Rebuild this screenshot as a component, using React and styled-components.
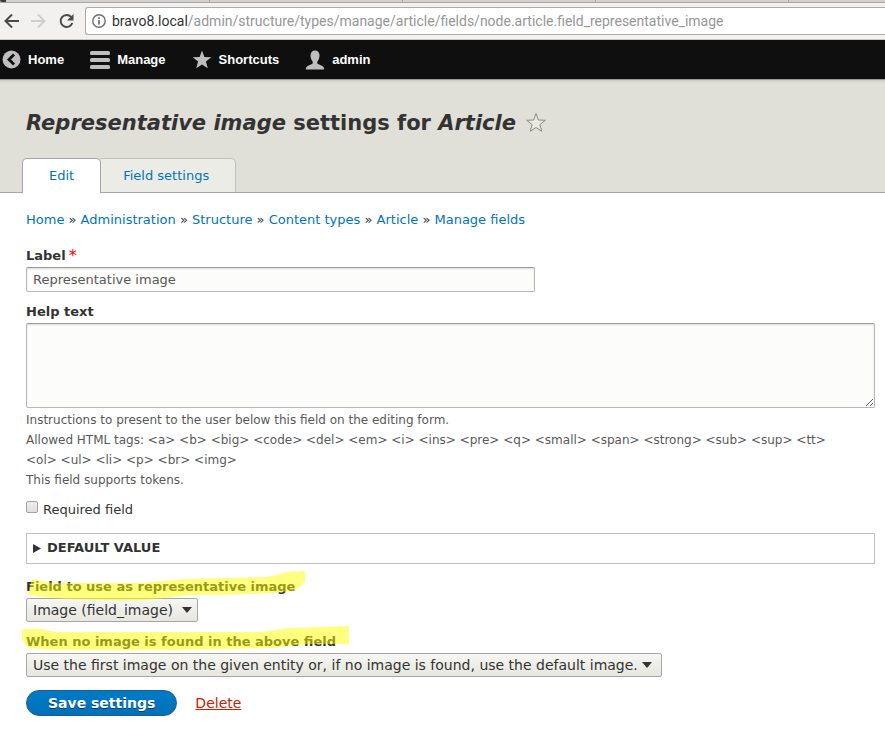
import React from "react";
import styled, { createGlobalStyle, css } from "styled-components";

const GlobalStyle = createGlobalStyle`
  *, *::before, *::after { box-sizing: border-box; }
  body {
    margin: 0;
    background: #fff;
    color: #333;
    font: 13px/20px "DejaVu Sans", Verdana, sans-serif;
    overflow-x: hidden;
  }
  a { color: #0074bd; text-decoration: none; }
  button, input, select, textarea { font-family: inherit; color: inherit; margin: 0; }
`;

const TabStrip = styled.div`
  display: grid;
  grid-template-columns: 210px repeat(3, 193px) 1fr;
  height: 3px;
  background: #d2d1cf;
  border-bottom: 1px solid #a9a8a6;
`;
const BrowserTab = styled.span`
  border-right: 1px solid #aaa9a7;
  &:last-child { border-right: 0; }
  &:first-child { border-left: 6px solid #3c3b37; border-bottom-left-radius: 2px; }
`;
const BrowserBar = styled.div`
  display: flex;
  align-items: center;
  height: 37px;
  background: #f2f1f0;
  border-bottom: 1px solid #c9c8c6;
`;
const NavButton = styled.button`
  display: flex;
  justify-content: center;
  align-items: center;
  flex-shrink: 0;
  width: 28px;
  height: 28px;
  padding: 0;
  border: 0;
  background: none;
  &:first-child { width: 24px; }
`;
const AddressBox = styled.div`
  display: flex;
  align-items: center;
  flex: 1;
  height: 28px;
  margin-left: 5px;
  padding-left: 6px;
  gap: 6px;
  background: #fff;
  border: 1px solid #acaba9;
  border-right: 0;
  border-radius: 3px 0 0 3px;
`;
const Address = styled.span`
  font: 14px/20px Roboto, "Noto Sans", sans-serif;
  color: #969696;
  white-space: nowrap;
  b { font-weight: 400; color: #333; }
`;

const AdminBar = styled.nav`
  display: flex;
  align-items: center;
  height: 39px;
  padding-left: 2px;
  gap: 26px;
  background: #0f0f0f;
`;
const AdminLink = styled.a`
  display: flex;
  align-items: center;
  gap: 7px;
  color: #fff;
  font: bold 13px/20px "Liberation Sans", Arial, sans-serif;
`;

const Header = styled.header`
  padding: 31px 22px 0;
  background: #e0e0d8;
  border-bottom: 1px solid #a6a6a6;
  box-shadow: inset 0 1px 0 #999, inset 0 4px 3px -2px #c4c4bd;
`;
const TitleRow = styled.div`
  display: flex;
  align-items: center;
  gap: 10px;
  padding: 0 4px;
`;
const Title = styled.h1`
  margin: 0;
  font-size: 21px;
  line-height: 26px;
`;
const StarButton = styled.button`
  display: flex;
  padding: 0;
  border: 0;
  background: none;
`;
const Tabs = styled.nav`
  display: flex;
  margin-top: 22px;
`;
const Tab = styled.a`
  height: 34px;
  padding: 6px 26px 0 22px;
  line-height: 22px;
  border: 1px solid #c0c0ba;
  border-width: 1px 1px 0 0;
  border-radius: 0 5px 0 0;
  background: #ecece6;
  ${({ $active }) => $active && css`
    height: 35px;
    margin-bottom: -1px;
    padding: 6px 26px 0;
    border: 1px solid #a6a6a6;
    border-bottom: 0;
    border-radius: 5px 5px 0 0;
    background: #fff;
  `}
`;

const Main = styled.main`
  padding: 17px 10px 16px 26px;
`;
const Breadcrumb = styled.nav`
  line-height: 20px;
  margin-bottom: 16px;
`;
const Form = styled.form`
  display: flex;
  flex-direction: column;
`;
const Field = styled.div`
  display: flex;
  flex-direction: column;
  align-items: flex-start;
  position: relative;
  margin-bottom: ${({ $gap }) => $gap}px;
`;
const Label = styled.label`
  display: flex;
  gap: 3px;
  font-weight: bold;
  line-height: 20px;
  margin-bottom: 1px;
`;
const RequiredMark = styled.span`
  color: #f00;
  font-size: 16px;
  font-weight: 400;
`;
const control = css`
  border: 1px solid #b8b8b8;
  border-top-color: #999;
  border-radius: 2px;
  background: #fcfcfa;
  box-shadow: inset 0 1px 2px rgba(0, 0, 0, 0.125);
  color: #595959;
  font-size: 13px;
`;
const TextInput = styled.input`
  ${control}
  width: 60%;
  height: 25px;
  padding: 0 6px;
`;
const TextArea = styled.textarea`
  ${control}
  display: block;
  width: 100%;
  height: 85px;
  padding: 4px 6px;
`;
const Help = styled.div`
  margin-top: 2px;
  padding-right: 20px;
  color: #595959;
  font-size: 12px;
  line-height: 20px;
`;
const CheckRow = styled.div`
  display: flex;
  gap: 5px;
  margin-bottom: 13px;
`;
const Checkbox = styled.input`
  appearance: none;
  width: 12px;
  height: 12px;
  margin-top: 1px;
  border: 1px solid #a3a3a3;
  border-radius: 2px;
  background: linear-gradient(#ededed, #dedede);
  &:checked { background: #0074bd; }
`;
const Details = styled.details`
  border: 1px solid #bfbfbf;
  margin-bottom: 13px;
`;
const Summary = styled.summary`
  display: flex;
  align-items: center;
  gap: 6px;
  padding: 4px 6px 5px;
  font-weight: bold;
  text-transform: uppercase;
`;
const SelectBox = styled.span`
  display: inline-grid;
  align-items: center;
  justify-items: end;
  > * { grid-area: 1 / 1; }
  svg { margin-right: ${({ $inset }) => $inset}px; pointer-events: none; }
`;
const Select = styled.select`
  appearance: none;
  height: 24px;
  padding: 0 23px 0 6px;
  border: 1px solid #a6a6a6;
  border-radius: 2px;
  background: linear-gradient(#f6f6f3, #e7e7df);
  font-size: 14px;
`;
const Marker = styled.svg`
  position: absolute;
  left: -4px;
  top: -9px;
  pointer-events: none;
`;
const Actions = styled.div`
  display: flex;
  align-items: center;
  gap: 18px;
`;
const SaveButton = styled.button`
  height: 26px;
  padding: 0 21px;
  border: 1px solid #1e5c90;
  border-radius: 13px;
  background: linear-gradient(#007bc6, #0071b8);
  color: #fff;
  font-size: 14px;
  font-weight: 700;
  text-shadow: 0 1px rgba(0, 0, 0, 0.5);
`;
const DeleteLink = styled.a`
  color: #c72100;
  font-size: 14px;
  text-decoration: underline;
`;

const crumbs = ["Home", "Administration", "Structure", "Content types", "Article", "Manage fields"];

const starPoints = "10,0.5 12.4,7 19.3,7.3 13.9,11.6 15.8,18.3 10,14.5 4.2,18.3 6.1,11.6 0.7,7.3 7.6,7";

function SelectField({ id, label, option, gap, inset, children }) {
  return (
    <Field $gap={gap}>
      <Label htmlFor={id}>{label}</Label>
      <SelectBox $inset={inset}>
        <Select id={id} defaultValue={option}>
          <option>{option}</option>
        </Select>
        <svg width="10" height="6" aria-hidden="true"><path d="M0 0h10L5 6z" fill="#333" /></svg>
      </SelectBox>
      {children}
    </Field>
  );
}

export default function App() {
  return (
    <>
      <GlobalStyle />
      <TabStrip><BrowserTab /><BrowserTab /><BrowserTab /><BrowserTab /><BrowserTab /></TabStrip>
      <BrowserBar>
        <NavButton aria-label="Back">
          <svg width="16" height="16" fill="none" stroke="#4a4a4a" strokeWidth="2"><path d="M15 8H2M8 1.500 1.500 8 8 14.500" /></svg>
        </NavButton>
        <NavButton aria-label="Forward" disabled>
          <svg width="16" height="16" fill="none" stroke="#cfcecc" strokeWidth="2"><path d="M1 8h13M8 1.500 14.500 8 8 14.500" /></svg>
        </NavButton>
        <NavButton aria-label="Reload">
          <svg width="16" height="16" fill="none" stroke="#4a4a4a" strokeWidth="2"><path d="M14.300 10A6 6 0 1 1 13.200 4.100" /><path d="M15.500 1v6.500H9z" fill="#4a4a4a" stroke="none" /></svg>
        </NavButton>
        <AddressBox>
          <svg width="14" height="14" fill="none" stroke="#6e6e6e" strokeWidth="1.400" aria-hidden="true"><circle cx="7" cy="7" r="6.200" /><path d="M7 6v4.500M7 3.300v1.600" strokeWidth="1.700" /></svg>
          <Address><b>bravo8.local</b>/admin/structure/types/manage/article/fields/node.article.field_representative_image</Address>
        </AddressBox>
      </BrowserBar>

      <AdminBar>
        <AdminLink href="#home">
          <svg width="19" height="19" viewBox="0 0 19 19"><circle cx="9.500" cy="9.500" r="9" fill="#bebebe" /><path d="M12 4.500 7 9.500l5 5" fill="none" stroke="#0f0f0f" strokeWidth="2.800" /></svg>
          Home
        </AdminLink>
        <AdminLink href="#manage">
          <svg width="20" height="20" fill="#bebebe"><rect y="1" width="20" height="4" rx="1.500" /><rect y="8" width="20" height="4" rx="1.500" /><rect y="15" width="20" height="4" rx="1.500" /></svg>
          Manage
        </AdminLink>
        <AdminLink href="#shortcuts">
          <svg width="20" height="20" viewBox="0 0 20 20"><polygon points={starPoints} fill="#bebebe" /></svg>
          Shortcuts
        </AdminLink>
        <AdminLink href="#admin">
          <svg width="20" height="20" viewBox="0 0 20 20"><path d="M10 .5C7 .5 5.500 2.500 5.500 5.600c0 2.700 1 4.400 2 5.800.6.900.3 2-.5 2.500C4 15.300.8 15.700.8 19.500h18.400c0-3.800-3.200-4.200-6.200-5.600-.8-.5-1.100-1.600-.5-2.500 1-1.400 2-3.100 2-5.800C14.500 2.500 13 .5 10 .5z" fill="#bebebe" /></svg>
          admin
        </AdminLink>
      </AdminBar>

      <Header>
        <TitleRow>
          <Title><em>Representative image</em> settings for <em>Article</em></Title>
          <StarButton aria-label="Add to shortcuts">
            <svg width="20" height="20" viewBox="0 0 20 20"><polygon points={starPoints} fill="#e9e9e2" stroke="#8c8c7a" /></svg>
          </StarButton>
        </TitleRow>
        <Tabs>
          <Tab href="#edit" $active>Edit</Tab>
          <Tab href="#field-settings">Field settings</Tab>
        </Tabs>
      </Header>

      <Main>
        <Breadcrumb>
          {crumbs.map((name, i) => (
            <React.Fragment key={name}>{i > 0 && " » "}<a href="#crumb">{name}</a></React.Fragment>
          ))}
        </Breadcrumb>
        <Form onSubmit={(e) => e.preventDefault()}>
          <Field $gap={10}>
            <Label htmlFor="label">Label<RequiredMark>*</RequiredMark></Label>
            <TextInput id="label" defaultValue="Representative image" />
          </Field>
          <Field $gap={10}>
            <Label htmlFor="help">Help text</Label>
            <TextArea id="help" />
            <Help>
              Instructions to present to the user below this field on the editing form.<br />
              {"Allowed HTML tags: <a> <b> <big> <code> <del> <em> <i> <ins> <pre> <q> <small> <span> <strong> <sub> <sup> <tt> <ol> <ul> <li> <p> <br> <img>"}<br />
              This field supports tokens.
            </Help>
          </Field>
          <CheckRow>
            <Checkbox type="checkbox" id="required" />
            <label htmlFor="required">Required field</label>
          </CheckRow>
          <Details>
            <Summary>
              <svg width="8" height="9" aria-hidden="true"><path d="M0 0v9l8-4.500z" fill="#333" /></svg>
              Default value
            </Summary>
          </Details>
          <SelectField id="source" label="Field to use as representative image" option="Image (field_image)" gap={10} inset={6}>
            <Marker width="290" height="34" aria-hidden="true">
              <path d="M10 11 30 15H118L164 11 245 9 266 4 283 3V14L274 22Q250 27 168 27L125 32Q70 33 30 30L6 27Z" fill="#ff0" fillOpacity=".5" />
            </Marker>
          </SelectField>
          <SelectField id="fallback" label="When no image is found in the above field" option="Use the first image on the given entity or, if no image is found, use the default image." gap={13} inset={10}>
            <Marker width="332" height="34" aria-hidden="true">
              <path d="M0 6H18L35 9H238L268 5 327 3V21H285L250 25Q130 28 30 27L6 25 0 16Z" fill="#ff0" fillOpacity=".5" />
            </Marker>
          </SelectField>
          <Actions>
            <SaveButton type="submit">Save settings</SaveButton>
            <DeleteLink href="#delete">Delete</DeleteLink>
          </Actions>
        </Form>
      </Main>
    </>
  );
}
